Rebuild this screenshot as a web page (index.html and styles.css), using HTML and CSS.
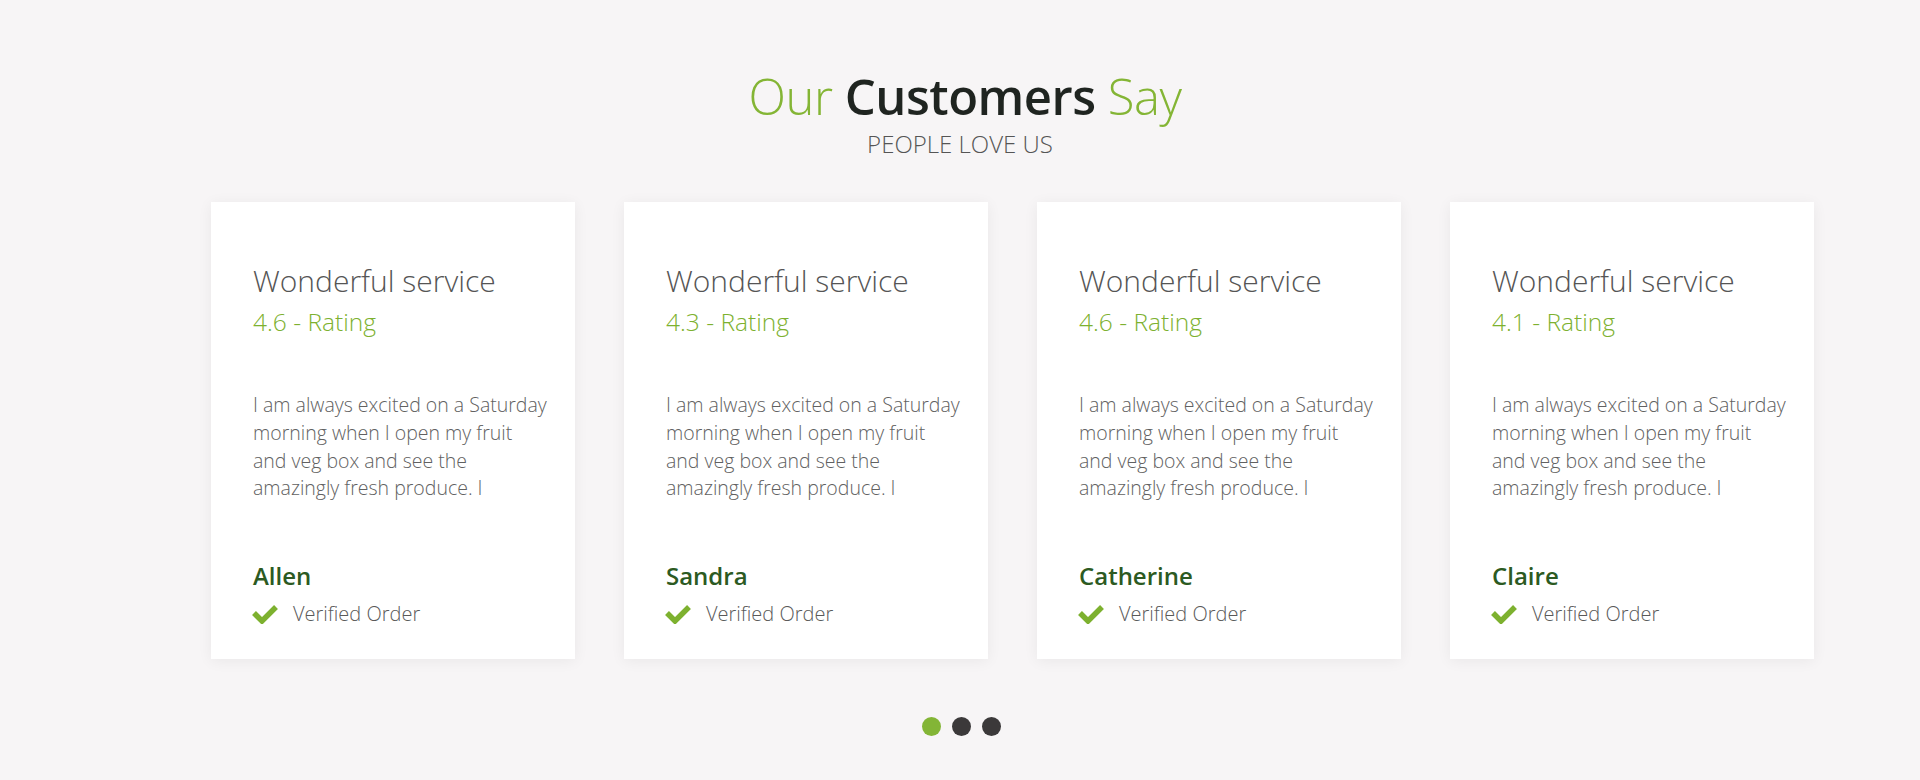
FILE: index.html
```html
<!DOCTYPE html>
<html lang="en">
<head>
<meta charset="utf-8">
<title>Our Customers Say</title>
<link rel="stylesheet" href="styles.css">
</head>
<body>
<section class="testimonials">
  <header class="section-head">
    <h2 class="section-title"><span class="accent">Our</span> <strong>Customers</strong> <span class="accent">Say</span></h2>
    <p class="section-sub">PEOPLE LOVE US</p>
  </header>
  <div class="cards">
    <article class="card">
      <h3 class="card-title">Wonderful service</h3>
      <p class="card-rating">4.6 - Rating</p>
      <p class="card-text">I am always excited on a Saturday morning when I open my fruit and veg box and see the amazingly fresh produce. I</p>
      <p class="card-name">Allen</p>
      <p class="card-verified"><svg class="check" viewBox="0 0 26 20" width="26" height="20"><polyline points="2,9 10,17 24,3" fill="none" stroke="#7db12f" stroke-width="5.5"/></svg><span>Verified Order</span></p>
    </article>
    <article class="card">
      <h3 class="card-title">Wonderful service</h3>
      <p class="card-rating">4.3 - Rating</p>
      <p class="card-text">I am always excited on a Saturday morning when I open my fruit and veg box and see the amazingly fresh produce. I</p>
      <p class="card-name">Sandra</p>
      <p class="card-verified"><svg class="check" viewBox="0 0 26 20" width="26" height="20"><polyline points="2,9 10,17 24,3" fill="none" stroke="#7db12f" stroke-width="5.5"/></svg><span>Verified Order</span></p>
    </article>
    <article class="card">
      <h3 class="card-title">Wonderful service</h3>
      <p class="card-rating">4.6 - Rating</p>
      <p class="card-text">I am always excited on a Saturday morning when I open my fruit and veg box and see the amazingly fresh produce. I</p>
      <p class="card-name">Catherine</p>
      <p class="card-verified"><svg class="check" viewBox="0 0 26 20" width="26" height="20"><polyline points="2,9 10,17 24,3" fill="none" stroke="#7db12f" stroke-width="5.5"/></svg><span>Verified Order</span></p>
    </article>
    <article class="card">
      <h3 class="card-title">Wonderful service</h3>
      <p class="card-rating">4.1 - Rating</p>
      <p class="card-text">I am always excited on a Saturday morning when I open my fruit and veg box and see the amazingly fresh produce. I</p>
      <p class="card-name">Claire</p>
      <p class="card-verified"><svg class="check" viewBox="0 0 26 20" width="26" height="20"><polyline points="2,9 10,17 24,3" fill="none" stroke="#7db12f" stroke-width="5.5"/></svg><span>Verified Order</span></p>
    </article>
  </div>
  <div class="dots">
    <span class="dot active"></span>
    <span class="dot"></span>
    <span class="dot"></span>
  </div>
</section>
</body>
</html>
```
FILE: styles.css
```css
* { box-sizing: border-box; }
html, body { margin: 0; padding: 0; }
body {
  background: #f7f5f6;
  font-family: "Open Sans", "Noto Sans", sans-serif;
  font-weight: 300;
  color: #555;
  height: 780px;
  overflow: hidden;
}
.testimonials { padding-top: 68px; }
.section-head { text-align: center; }
.section-title {
  margin: 0;
  font-size: 49px;
  line-height: 56px;
  font-weight: 300;
  color: #1f2420;
  letter-spacing: -0.5px;
  padding-left: 10px;
}
.section-title .accent { color: #84b535; }
.section-title strong { font-weight: 600; }
.section-sub {
  margin: 5px 0 0;
  font-size: 24px;
  line-height: 30px;
  color: #555;
}
.cards {
  display: flex;
  gap: 49px;
  margin: 43px 0 0 211px;
}
.card {
  width: 364px;
  height: 457px;
  background: #fff;
  box-shadow: 0 2px 14px rgba(0, 0, 0, 0.06);
  padding: 61px 26px 0 42px;
}
.card p { margin: 0; }
.card-title {
  margin: 0;
  font-size: 30px;
  line-height: 36px;
  font-weight: 300;
  color: #555;
}
.card-rating {
  margin-top: 7px !important;
  font-size: 24.5px;
  line-height: 32px;
  color: #7db12f;
}
.card-text {
  margin-top: 53px !important;
  font-size: 19.5px;
  line-height: 27.8px;
  color: #616161;
}
.card-name {
  margin-top: 59px !important;
  font-size: 24px;
  line-height: 30px;
  font-weight: 600;
  color: #2c5a22;
}
.card-verified {
  margin-top: 10px !important;
  display: flex;
  align-items: center;
  gap: 15px;
  font-size: 20px;
  line-height: 26px;
  color: #5a5a5a;
}
.check { flex: none; margin-left: -1px; }
.dots {
  display: flex;
  justify-content: center;
  gap: 11px;
  margin-top: 58px;
  padding-left: 2px;
}
.dot {
  width: 19px;
  height: 19px;
  border-radius: 50%;
  background: #3b393a;
}
.dot.active { background: #83b536; }
```
